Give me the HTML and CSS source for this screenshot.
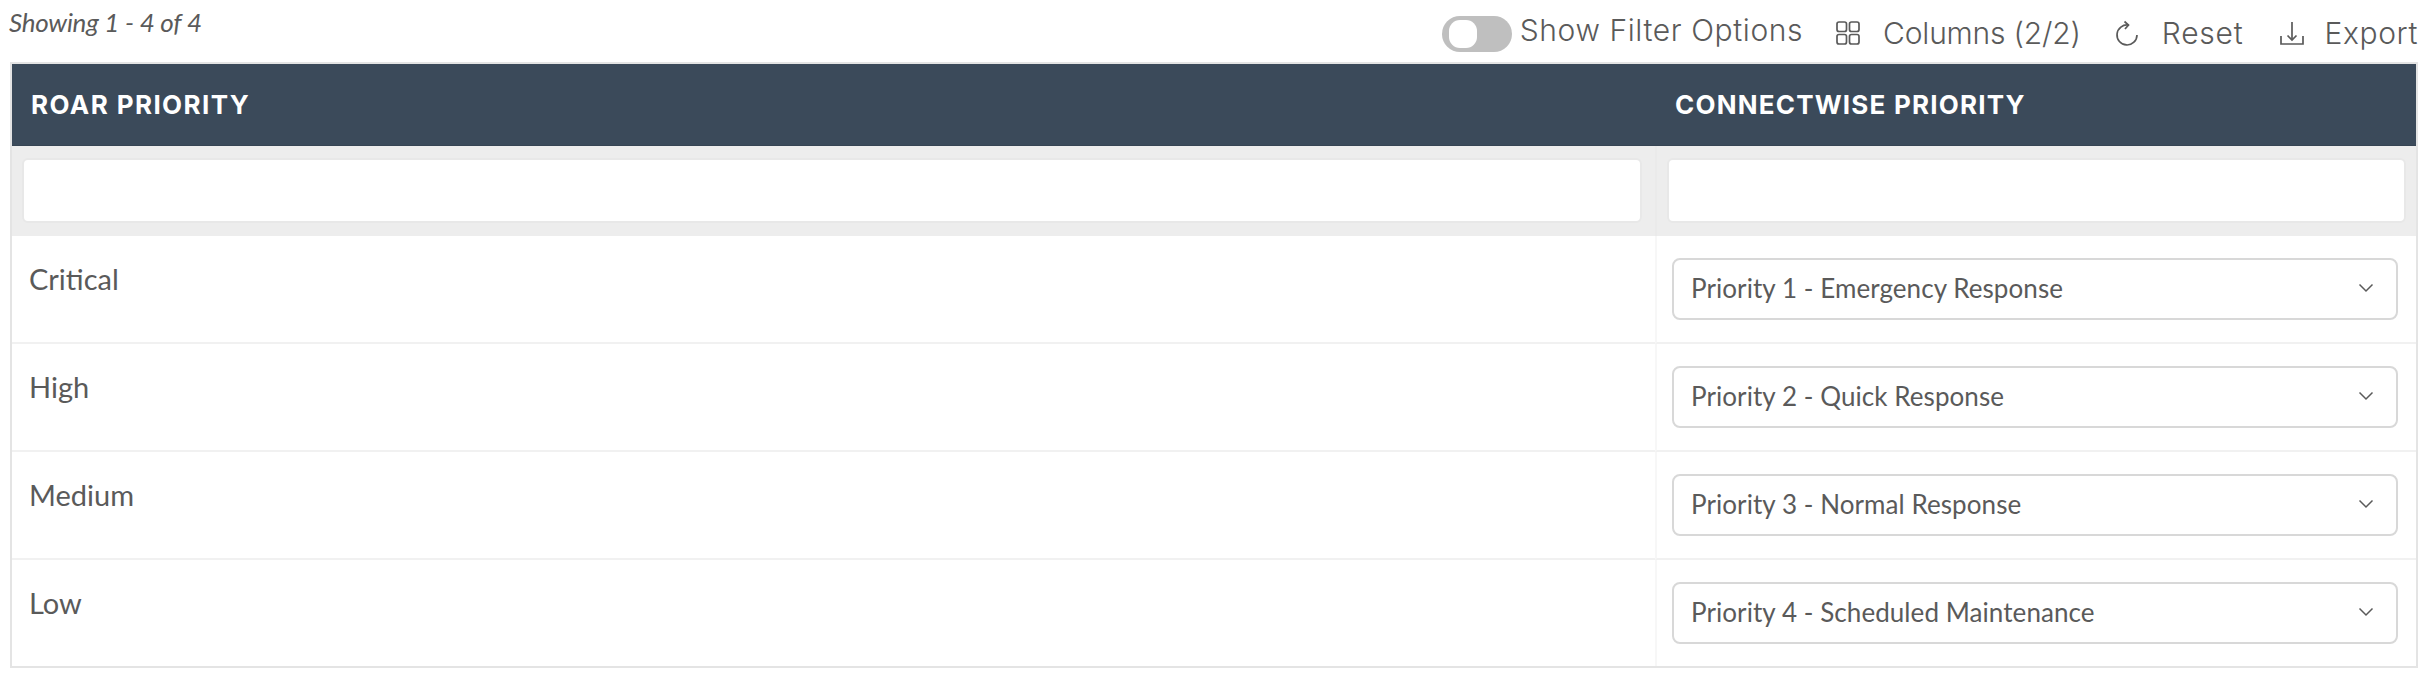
FILE: index.html
```html
<!DOCTYPE html>
<html lang="en">
<head>
  <meta charset="UTF-8" />
  <title>Priority Mapping</title>
  <link rel="stylesheet" href="styles.css">
</head>
<body>
  <!-- Toolbar -->
  <div class="topbar">
    <div class="showing">Showing 1 - 4 of 4</div>
    <div class="tools">
      <div class="toggle"><span class="knob"></span></div>
      <span class="tool-label filter-label">Show Filter Options</span>
      <svg class="icon columns-icon" viewBox="0 0 24 24"><rect x="1" y="1" width="9.5" height="9.5" rx="2"/><rect x="13.5" y="1" width="9.5" height="9.5" rx="2"/><rect x="1" y="13.5" width="9.5" height="9.5" rx="2"/><rect x="13.5" y="13.5" width="9.5" height="9.5" rx="2"/></svg>
      <span class="tool-label columns-label">Columns (2/2)</span>
      <svg class="icon reset-icon" viewBox="0 0 24 24"><path d="M13.5 4.1A10 10 0 1 0 22 14"/><path d="M9.5 0.5 13.5 4 10 8"/></svg>
      <span class="tool-label reset-label">Reset</span>
      <svg class="icon export-icon" viewBox="0 0 24 24"><path d="M12 1v18"/><path d="M7.5 14.5 12 19l4.500-4.500"/><path d="M1 15v8h22v-8"/></svg>
      <span class="tool-label export-label">Export</span>
    </div>
  </div>

  <!-- Table -->
  <table class="grid">
    <thead>
      <tr class="head-row">
        <th class="col-roar">ROAR PRIORITY</th>
        <th>CONNECTWISE PRIORITY</th>
      </tr>
      <tr class="filter-row">
        <td><div class="filter-input"></div></td>
        <td><div class="filter-input"></div></td>
      </tr>
    </thead>
    <tbody>
      <tr>
        <td class="name">Critical</td>
        <td class="pick"><div class="select">Priority 1 - Emergency Response<svg class="chevron" viewBox="0 0 16 10"><path d="M1.5 1.5 8 8l6.5-6.5"/></svg></div></td>
      </tr>
      <tr>
        <td class="name">High</td>
        <td class="pick"><div class="select">Priority 2 - Quick Response<svg class="chevron" viewBox="0 0 16 10"><path d="M1.5 1.5 8 8l6.5-6.5"/></svg></div></td>
      </tr>
      <tr>
        <td class="name">Medium</td>
        <td class="pick"><div class="select">Priority 3 - Normal Response<svg class="chevron" viewBox="0 0 16 10"><path d="M1.5 1.5 8 8l6.5-6.5"/></svg></div></td>
      </tr>
      <tr>
        <td class="name">Low</td>
        <td class="pick"><div class="select">Priority 4 - Scheduled Maintenance<svg class="chevron" viewBox="0 0 16 10"><path d="M1.5 1.5 8 8l6.5-6.5"/></svg></div></td>
      </tr>
    </tbody>
  </table>
</body>
</html>
```

FILE: styles.css
```css
* {
  box-sizing: border-box;
}

body {
  margin: 0;
  padding: 0 14px 14px 10px;
  background: #fff;
  color: #5a5a5a;
  font-family: 'Lato', sans-serif;
}

.topbar {
  display: flex;
  justify-content: space-between;
  height: 62px;
}

.showing {
  font-size: 26px;
  font-style: italic;
  line-height: 44px;
  margin-left: -1px;
  letter-spacing: -0.25px;
}

.tools {
  display: flex;
  align-items: center;
  height: 62px;
  font-family: 'Inter', sans-serif;
  font-size: 30px;
  font-weight: 300;
  color: #5a5a5a;
}

.toggle {
  width: 70px;
  height: 36px;
  margin-top: 6px;
  padding: 4px 7px;
  border-radius: 18px;
  background: #bfbfbf;
}

.knob {
  display: block;
  width: 28px;
  height: 28px;
  border-radius: 11px;
  background: #fff;
}

.tool-label {
  white-space: nowrap;
}

.filter-label {
  margin: 0 33px 0 8px;
  padding-bottom: 2px;
  letter-spacing: 0.6px;
}

.columns-label {
  margin: 4px 34px 0 23px;
  letter-spacing: -0.2px;
}

.reset-label {
  margin: 4px 36px 0 23px;
  letter-spacing: 0.8px;
}

.export-label {
  margin: 4px 0 0 21px;
  letter-spacing: 0.6px;
}

.icon {
  flex: none;
  width: 24px;
  height: 24px;
  margin-top: 4px;
  overflow: visible;
  fill: none;
  stroke: #5a5a5a;
  stroke-width: 1.7;
}

.grid {
  width: 2408px;
  table-layout: fixed;
  border-collapse: separate;
  border-spacing: 0;
  border: 2px solid #e4e4e4;
}

.col-roar {
  width: 1643px;
}

.head-row th {
  height: 82px;
  padding: 0 19px;
  background: #3b4a5a;
  border-bottom: 1px solid #364453;
  color: #fff;
  font-family: 'Inter', sans-serif;
  font-size: 26px;
  font-weight: 700;
  letter-spacing: 1.4px;
  text-align: left;
}

.head-row th + th {
  padding-left: 20px;
  letter-spacing: 1.2px;
}

.filter-row td {
  height: 90px;
  padding: 12px 10px 13px;
  background: #ededed;
  border-left: 2px solid #eaeaea;
}

.filter-row td:first-child {
  padding-right: 13px;
  border-left: 0;
}

.filter-input {
  height: 65px;
  background: #fff;
  border: 2px solid #e8e8e8;
  border-radius: 6px;
}

tbody td {
  height: 108px;
  border-bottom: 2px solid #f1f1f1;
  border-left: 2px solid #f7f7f7;
}

tbody td:first-child {
  border-left: 0;
}

tbody tr:last-child td {
  height: 106px;
  border-bottom: 0;
}

.name {
  padding: 0 17px 21px;
  font-size: 29px;
}

.pick {
  padding: 0 18px 0 15px;
}

.select {
  display: flex;
  align-items: center;
  justify-content: space-between;
  height: 62px;
  padding: 0 22px 2px 17px;
  border: 2px solid #d8d8d8;
  border-radius: 8px;
  font-size: 26px;
  letter-spacing: 0.07px;
}

.chevron {
  width: 16px;
  height: 10px;
  fill: none;
  stroke: #5a5a5a;
  stroke-width: 1.5;
}
```
